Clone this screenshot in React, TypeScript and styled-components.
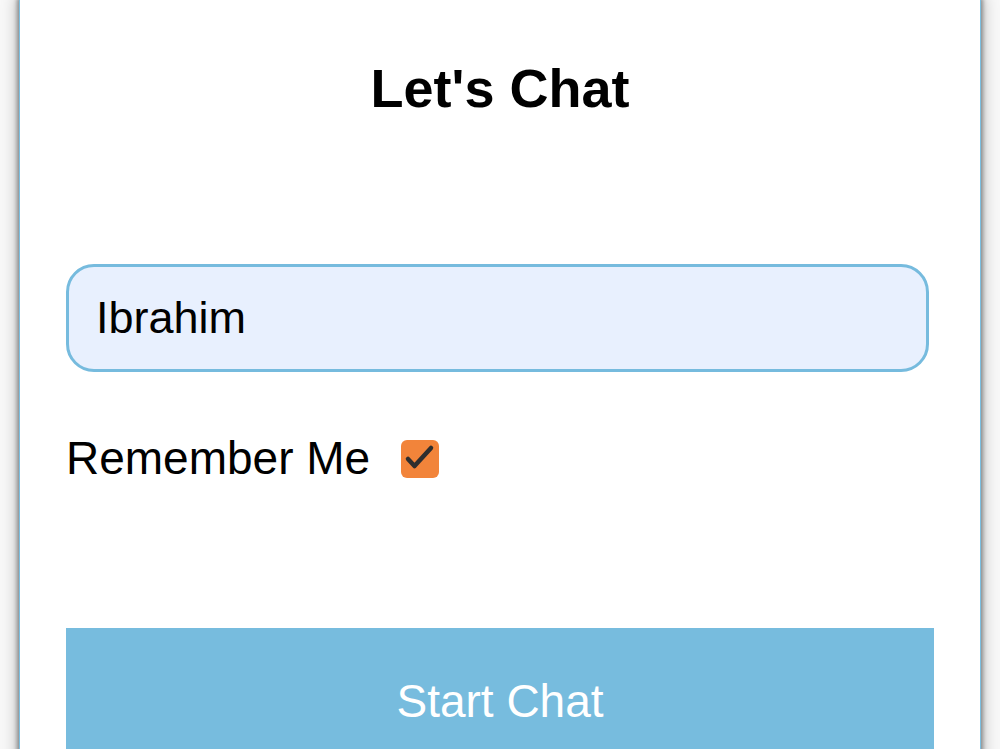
import React, { useState } from 'react'
import styled, { createGlobalStyle } from 'styled-components'

const GlobalStyle = createGlobalStyle`
  html, body {
    margin: 0;
    padding: 0;
    background: #f8f8f8;
    font-family: "Liberation Sans", Arial, sans-serif;
  }
`

const Page = styled.div`
  height: 749px;
  overflow: hidden;
  padding: 0 19px;
  box-sizing: border-box;
`

const Card = styled.div`
  height: 820px;
  box-sizing: border-box;
  background: #fff;
  border-left: 1px solid #7cbfe0;
  border-right: 1px solid #7cbfe0;
  box-shadow: 0 0 4px 2px rgba(0, 0, 0, 0.35), 0 0 14px 4px rgba(0, 0, 0, 0.2);
  padding: 58px 46px 0;
  display: flex;
  flex-direction: column;
`

const Title = styled.h1`
  margin: 0;
  font-size: 54px;
  line-height: 61px;
  font-weight: bold;
  color: #000;
  text-align: center;
`

const NameInput = styled.input`
  margin-top: 145px;
  width: 863px;
  height: 108px;
  box-sizing: border-box;
  border: 3px solid #76bbde;
  border-radius: 28px;
  background: #e8f0fe;
  padding: 0 27px;
  font-family: inherit;
  font-size: 45px;
  color: #000;
  outline: none;
`

const RememberRow = styled.label`
  margin-top: 60px;
  display: flex;
  align-items: center;
  gap: 31px;
  font-size: 46px;
  line-height: 52px;
  color: #000;
  cursor: pointer;
`

const Box = styled.span<{ checked: boolean }>`
  width: 38px;
  height: 38px;
  border-radius: 6px;
  background: ${(p) => (p.checked ? '#f2843a' : '#fff')};
  border: ${(p) => (p.checked ? 'none' : '2px solid #999')};
  display: flex;
  align-items: center;
  justify-content: center;
  margin-top: 2px;
`

const StartButton = styled.button`
  margin-top: 144px;
  width: 100%;
  height: 150px;
  border: none;
  border-radius: 0 0 12px 12px;
  background: #77bcde;
  color: #fff;
  font-family: inherit;
  font-size: 46px;
  line-height: 52px;
  padding: 47px 0 0;
  display: flex;
  justify-content: center;
  align-items: flex-start;
  cursor: pointer;
`

export default function App() {
  const [name, setName] = useState('Ibrahim')
  const [remember, setRemember] = useState(true)

  return (
    <Page>
      <GlobalStyle />
      <Card>
        <Title>Let's Chat</Title>
        <NameInput value={name} onChange={(e) => setName(e.target.value)} />
        <RememberRow onClick={() => setRemember(!remember)}>
          Remember Me
          <Box checked={remember}>
            {remember && (
              <svg width="38" height="38" viewBox="0 0 38 38">
                <path
                  d="M7 19 L13.5 26 L30 8"
                  fill="none"
                  stroke="#2e2e2e"
                  strokeWidth="4.5"
                  strokeLinecap="round"
                  strokeLinejoin="round"
                />
              </svg>
            )}
          </Box>
        </RememberRow>
        <StartButton>Start Chat</StartButton>
      </Card>
    </Page>
  )
}
